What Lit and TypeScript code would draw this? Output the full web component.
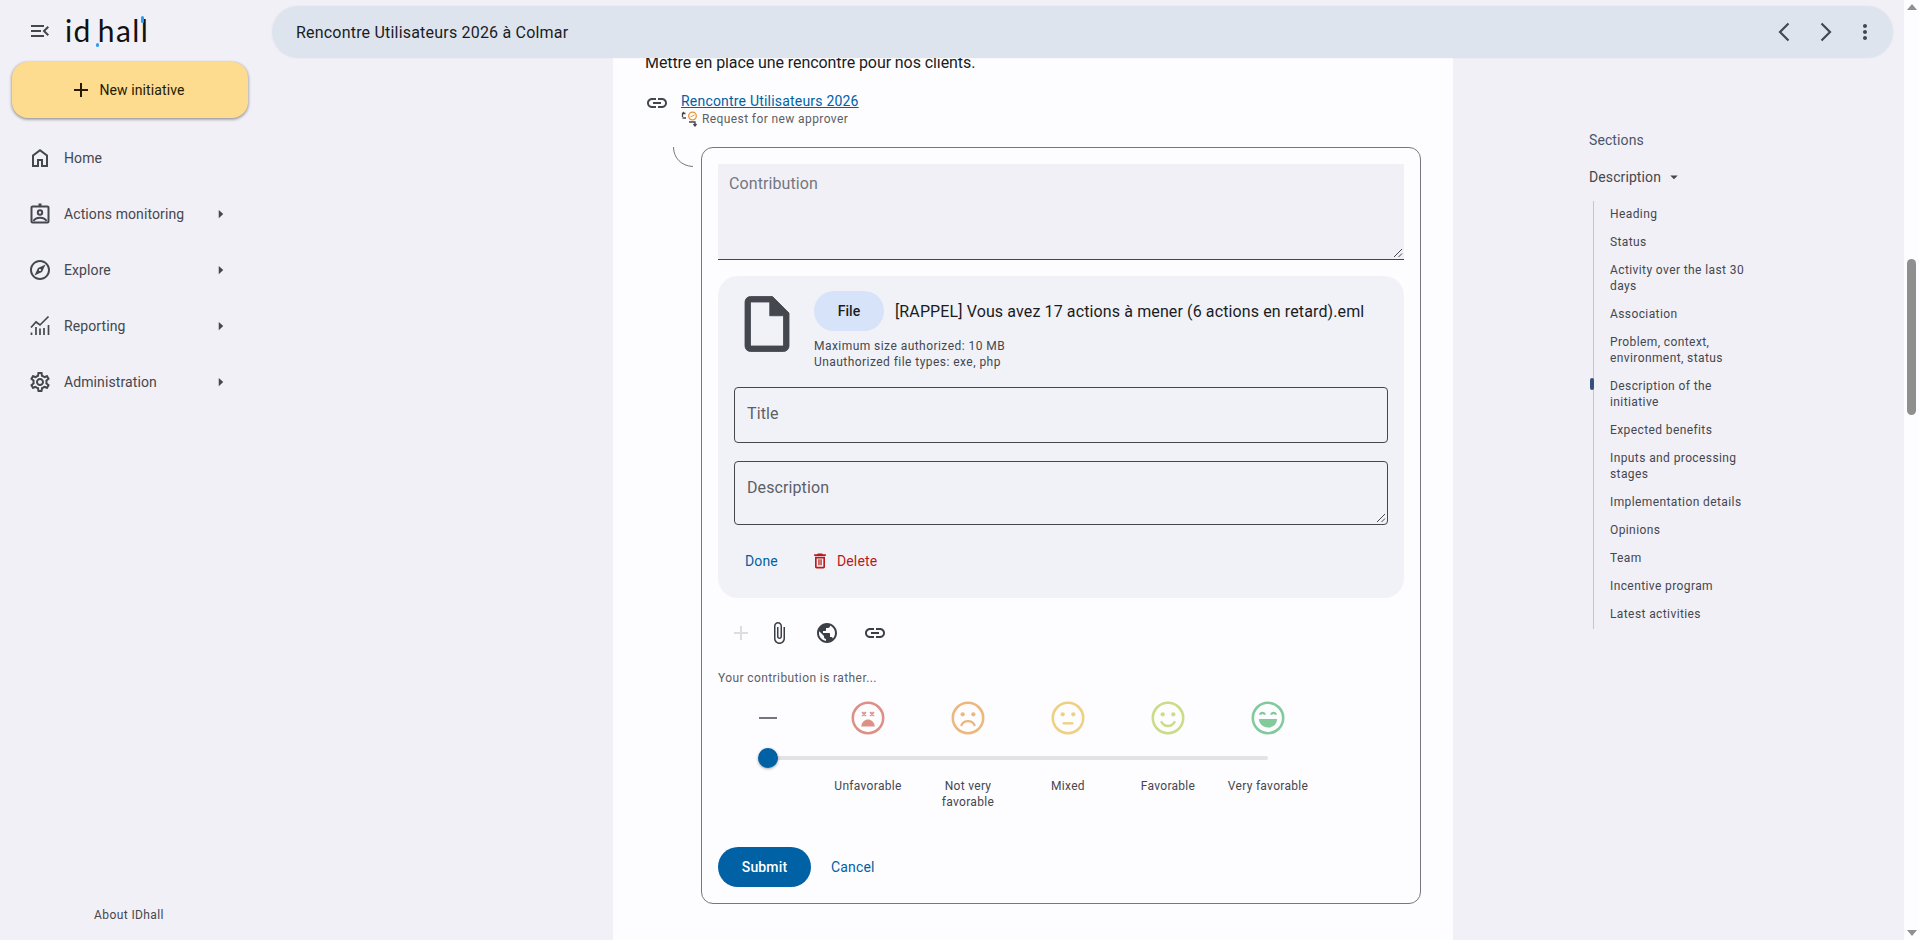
import { css, html, LitElement, svg } from "lit";
import { customElement } from "lit/decorators.js";

const ICONS: Record<string, any> = {
  menu: svg`<path d="M3 18h13v-2H3v2zm0-5h10v-2H3v2zm0-7v2h13V6H3zm18 9.59L17.42 12 21 8.41 19.59 7l-5 5 5 5L21 15.59z"/>`,
  add: svg`<path d="M19 13h-6v6h-2v-6H5v-2h6V5h2v6h6v2z"/>`,
  home: svg`<path d="M6 19h3v-6h6v6h3v-9l-6-4.5L6 10v9zm-2 2V9l8-6 8 6v12h-7v-6h-2v6H4z"/>`,
  actions: svg`<g fill="none" stroke="currentColor" stroke-width="2"><rect x="3.5" y="4.5" width="17" height="16" rx="1"/><circle cx="12" cy="10.5" r="2.2"/><path d="M5.5 19c1.2-2.6 3.8-3.3 6.5-3.3s5.3.7 6.5 3.3"/></g><rect x="10.5" y="1.5" width="3" height="3"/>`,
  explore: svg`<path d="M12 2C6.48 2 2 6.48 2 12s4.48 10 10 10 10-4.48 10-10S17.52 2 12 2zm0 18c-4.41 0-8-3.59-8-8s3.59-8 8-8 8 3.59 8 8-3.59 8-8 8zm-5.5-2.5l7.51-3.49L17.5 6.5 9.99 9.99 6.5 17.5zm5.5-6.6c.61 0 1.1.49 1.1 1.1s-.49 1.1-1.1 1.1-1.1-.49-1.1-1.1.49-1.1 1.1-1.1z"/>`,
  reporting: svg`<g fill="none" stroke="currentColor" stroke-width="1.7"><path d="M3 13.5l5-5.5 4 3 8.5-8.5"/><path d="M3.5 21v-2.5M8 21v-8M12 21v-6.5M16 21v-7M20.5 21v-10"/></g>`,
  settings: svg`<path d="M19.43 12.98c.04-.32.07-.64.07-.98 0-.34-.03-.66-.07-.98l2.11-1.65c.19-.15.24-.42.12-.64l-2-3.46c-.09-.16-.26-.25-.44-.25-.06 0-.12.01-.17.03l-2.49 1c-.52-.4-1.08-.73-1.69-.98l-.38-2.65C14.46 2.18 14.25 2 14 2h-4c-.25 0-.46.18-.49.42l-.38 2.65c-.61.25-1.17.59-1.69.98l-2.49-1c-.06-.02-.12-.03-.18-.03-.17 0-.34.09-.43.25l-2 3.46c-.13.22-.07.49.12.64l2.11 1.65c-.04.32-.07.65-.07.98 0 .33.03.66.07.98l-2.11 1.65c-.19.15-.24.42-.12.64l2 3.46c.09.16.26.25.44.25.06 0 .12-.01.17-.03l2.49-1c.52.4 1.08.73 1.69.98l.38 2.65c.03.24.24.42.49.42h4c.25 0 .46-.18.49-.42l.38-2.65c.61-.25 1.17-.59 1.69-.98l2.49 1c.06.02.12.03.18.03.17 0 .34-.09.43-.25l2-3.46c.12-.22.07-.49-.12-.64l-2.11-1.65zm-1.98-1.71c.04.31.05.52.05.73 0 .21-.02.43-.05.73l-.14 1.13.89.7 1.08.84-.7 1.21-1.27-.51-1.04-.42-.9.68c-.43.32-.84.56-1.25.73l-1.06.43-.16 1.13-.2 1.35h-1.4l-.19-1.35-.16-1.13-1.06-.43c-.43-.18-.83-.41-1.23-.71l-.91-.7-1.06.43-1.27.51-.7-1.21 1.08-.84.89-.7-.14-1.13c-.03-.31-.05-.54-.05-.74s.02-.43.05-.73l.14-1.13-.89-.7-1.08-.84.7-1.21 1.27.51 1.04.42.9-.68c.43-.32.84-.56 1.25-.73l1.06-.43.16-1.13.2-1.35h1.39l.19 1.35.16 1.13 1.06.43c.43.18.83.41 1.23.71l.91.7 1.06-.43 1.27-.51.7 1.21-1.07.85-.89.7.14 1.13zM12 8c-2.21 0-4 1.79-4 4s1.79 4 4 4 4-1.79 4-4-1.79-4-4-4zm0 6c-1.1 0-2-.9-2-2s.9-2 2-2 2 .9 2 2-.9 2-2 2z"/>`,
  caret: svg`<path d="M9 17.5l6-5.5-6-5.5v11z"/>`,
  caretDown: svg`<path d="M7 10l5 5 5-5z"/>`,
  back: svg`<path d="M15.5 3.5L7 12l8.5 8.5" fill="none" stroke="currentColor" stroke-width="2.2"/>`,
  next: svg`<path d="M8.5 3.5L17 12l-8.5 8.5" fill="none" stroke="currentColor" stroke-width="2.2"/>`,
  more: svg`<path d="M12 8c1.1 0 2-.9 2-2s-.9-2-2-2-2 .9-2 2 .9 2 2 2zm0 2c-1.1 0-2 .9-2 2s.9 2 2 2 2-.9 2-2-.9-2-2-2zm0 6c-1.1 0-2 .9-2 2s.9 2 2 2 2-.9 2-2-.9-2-2-2z"/>`,
  link: svg`<path d="M3.9 12c0-1.71 1.39-3.1 3.1-3.1h4V7H7c-2.76 0-5 2.24-5 5s2.24 5 5 5h4v-1.9H7c-1.71 0-3.1-1.39-3.1-3.1zM8 13h8v-2H8v2zm9-6h-4v1.9h4c1.71 0 3.1 1.39 3.1 3.1s-1.39 3.1-3.1 3.1h-4V17h4c2.76 0 5-2.24 5-5s-2.24-5-5-5z"/>`,
  file: svg`<path stroke="currentColor" stroke-width=".3" stroke-linejoin="round" d="M14 2H6c-1.1 0-1.99.9-1.99 2L4 20c0 1.1.89 2 1.99 2H18c1.1 0 2-.9 2-2V8l-6-6zM6 20V4h7v5h5v11H6z"/>`,
  trash: svg`<path d="M16 9v10H8V9h8m-1.5-6h-5l-1 1H5v2h14V4h-3.5l-1-1zM18 7H6v12c0 1.1.9 2 2 2h8c1.1 0 2-.9 2-2V7z"/><path d="M10 10h1.5v7H10zM12.5 10H14v7h-1.5z"/>`,
  clip: svg`<path d="M16.5 6v11.5c0 2.21-1.79 4-4 4s-4-1.79-4-4V5c0-1.38 1.12-2.5 2.5-2.5s2.5 1.12 2.5 2.5v10.5c0 .55-.45 1-1 1s-1-.45-1-1V6H10v9.5c0 1.38 1.12 2.5 2.5 2.5s2.5-1.12 2.5-2.5V5c0-2.21-1.79-4-4-4S7 2.79 7 5v12.5c0 3.04 2.46 5.5 5.5 5.5s5.5-2.46 5.5-5.5V6h-1.5z"/>`,
  globe: svg`<path d="M12 2C6.48 2 2 6.48 2 12s4.48 10 10 10 10-4.48 10-10S17.52 2 12 2zm-1 17.93c-3.95-.49-7-3.85-7-7.93 0-.62.08-1.21.21-1.79L9 15v1c0 1.1.9 2 2 2v1.93zm6.9-2.54c-.26-.81-1-1.39-1.9-1.39h-1v-3c0-.55-.45-1-1-1H8v-2h2c.55 0 1-.45 1-1V7h2c1.1 0 2-.9 2-2v-.41c2.93 1.19 5 4.06 5 7.41 0 2.08-.8 3.97-2.1 5.39z"/>`,
};

const icon = (name: string, size = 24) =>
  html`<svg class="icon" width=${size} height=${size} viewBox="0 0 24 24" fill="currentColor">${ICONS[name]}</svg>`;

const FACES = [
  {
    label: "Unfavorable",
    color: "#dd9184",
    face: svg`<path d="M10.5 10.5l3.5 3.5M14 10.5l-3.5 3.5M18 10.5l3.5 3.5M21.5 10.5l-3.5 3.5" stroke-width="1.8"/><path d="M9.5 24c1-4.5 3.5-6.5 6.5-6.5s5.5 2 6.5 6.5z" fill="currentColor" stroke="none"/>`,
  },
  {
    label: "Not very favorable",
    color: "#ecb87e",
    face: svg`<circle cx="11" cy="12.5" r="2" fill="currentColor" stroke="none"/><circle cx="21" cy="12.5" r="2" fill="currentColor" stroke="none"/><path d="M9.5 23.5c1.3-3 3.7-4.5 6.5-4.5s5.2 1.5 6.5 4.5" stroke-width="2.2"/>`,
  },
  {
    label: "Mixed",
    color: "#edd181",
    face: svg`<circle cx="11" cy="12.5" r="2" fill="currentColor" stroke="none"/><circle cx="21" cy="12.5" r="2" fill="currentColor" stroke="none"/><path d="M11 21h10" stroke-width="2.2"/>`,
  },
  {
    label: "Favorable",
    color: "#c9dd85",
    face: svg`<circle cx="11" cy="12.5" r="2" fill="currentColor" stroke="none"/><circle cx="21" cy="12.5" r="2" fill="currentColor" stroke="none"/><path d="M9.5 19c1.3 3 3.7 4.5 6.5 4.5s5.2-1.5 6.5-4.5" stroke-width="2.2"/>`,
  },
  {
    label: "Very favorable",
    color: "#82c99c",
    face: svg`<path d="M8.5 13c.5-2.5 4-2.5 4.5 0M19 13c.5-2.5 4-2.5 4.5 0" stroke-width="2"/><path d="M7.5 17h17c0 4.5-3.8 8-8.5 8s-8.5-3.5-8.5-8z" fill="currentColor" stroke="none"/>`,
  },
];

const NAV = [
  { label: "Home", icon: "home" },
  { label: "Actions monitoring", icon: "actions", sub: true },
  { label: "Explore", icon: "explore", sub: true },
  { label: "Reporting", icon: "reporting", sub: true },
  { label: "Administration", icon: "settings", sub: true },
];

const SECTIONS = [
  "Heading",
  "Status",
  "Activity over the last 30 days",
  "Association",
  "Problem, context, environment, status",
  "Description of the initiative",
  "Expected benefits",
  "Inputs and processing stages",
  "Implementation details",
  "Opinions",
  "Team",
  "Incentive program",
  "Latest activities",
];

@customElement("app-root")
export class AppRoot extends LitElement {
  static styles = css`
    :host {
      display: block;
      height: 100vh;
      overflow: hidden;
      font-family: Roboto, "Liberation Sans", sans-serif;
      color: #1a1c1e;
    }
    .icon {
      display: block;
      flex: none;
    }
    .shell {
      display: flex;
      height: 100%;
      background: #f1f0f6;
    }

    /* left rail */
    .side {
      width: 272px;
      flex: none;
      display: flex;
      flex-direction: column;
      padding: 0 0 18px 12px;
      box-sizing: border-box;
    }
    .brand {
      display: flex;
      align-items: center;
      height: 62px;
      padding-left: 16px;
      gap: 13px;
      color: #44474e;
    }
    .logo {
      position: relative;
      font: 400 30px/40px Lato, sans-serif;
      color: #111;
      letter-spacing: 1.4px;
      margin-top: -2px;
    }
    .logo b {
      font-weight: 400;
      margin-left: 6px;
    }
    .logo i {
      position: absolute;
      background: #2f9bf0;
      border-radius: 2px;
    }
    .logo .a {
      left: 31px;
      top: 33px;
      width: 3px;
      height: 4px;
    }
    .logo .b {
      left: 76px;
      top: 6px;
      width: 3px;
      height: 7px;
    }
    .create {
      display: flex;
      align-items: center;
      justify-content: center;
      gap: 6px;
      width: 236px;
      height: 56px;
      border-radius: 16px;
      background: #fddc90;
      box-shadow: 0 1px 3px rgba(0, 0, 0, 0.3), 0 1px 3px 1px rgba(0, 0, 0, 0.15);
      font-size: 14px;
      font-weight: 450;
      letter-spacing: 0.1px;
      color: #261a00;
      padding-right: 6px;
      box-sizing: border-box;
    }
    .nav {
      margin-top: 12px;
      width: 218px;
    }
    .nav-item {
      display: flex;
      align-items: center;
      height: 56px;
      padding-left: 16px;
      gap: 12px;
      font-size: 14px;
      letter-spacing: 0.1px;
      color: #44474e;
    }
    .nav-item span {
      flex: 1;
    }
    .about {
      margin-top: auto;
      width: 234px;
      text-align: center;
      font-size: 12px;
      letter-spacing: 0.4px;
      color: #44474e;
    }

    /* centre */
    .main {
      flex: 1;
      position: relative;
      min-width: 0;
      display: flex;
      align-items: stretch;
    }
    .topbar {
      position: absolute;
      top: 6px;
      left: 0;
      right: 11px;
      height: 52px;
      border-radius: 26px;
      background: #dee4ee;
      box-shadow: 0 0 3px rgba(0, 0, 0, 0.05);
      display: flex;
      align-items: center;
      padding: 0 16px 0 24px;
      font-size: 16px;
      letter-spacing: 0.2px;
      color: #1a1c1e;
      z-index: 2;
    }
    .topbar .title {
      flex: 1;
    }
    .topbar .btns {
      display: flex;
      gap: 16px;
      color: #44474e;
    }
    .panel {
      margin: 58px 0 0 341px;
      width: 840px;
      background: #fdfcff;
      box-sizing: border-box;
      padding: 0 32px;
      flex: none;
    }
    .intro {
      margin-top: -7px;
      font-size: 16px;
      line-height: 24px;
      letter-spacing: -0.08px;
    }
    .ref {
      display: flex;
      gap: 12px;
      margin-top: 16px;
    }
    .ref .link-icon {
      color: #44474e;
    }
    .ref a {
      display: block;
      font-size: 14px;
      line-height: 20px;
      letter-spacing: 0.2px;
      color: #0061a4;
      text-decoration: underline;
    }
    .ref .req {
      display: flex;
      align-items: center;
      gap: 4px;
      height: 18px;
      margin-top: -1px;
      font-size: 12px;
      letter-spacing: 0.4px;
      color: #5c5f66;
    }

    .thread {
      display: flex;
      margin-top: 19px;
      padding-left: 28px;
    }
    .curve {
      width: 28px;
      height: 20px;
      flex: none;
    }
    .card {
      width: 720px;
      height: 757px;
      box-sizing: border-box;
      border: 1px solid #74777f;
      border-radius: 12px;
      padding: 16px;
      flex: none;
    }
    .area {
      height: 96px;
      box-sizing: border-box;
      background: #f1f0f6;
      border-bottom: 1px solid #44474e;
      padding: 11px 11px;
      font-size: 16px;
      line-height: 18px;
      letter-spacing: 0.1px;
      color: #74777f;
      position: relative;
    }
    .grip {
      position: absolute;
      right: 1px;
      bottom: 1px;
      width: 10px;
      height: 10px;
    }
    .filebox {
      margin-top: 16px;
      height: 322px;
      box-sizing: border-box;
      background: #f1f2f8;
      border-radius: 20px;
      padding: 15px 16px 16px;
    }
    .filehead {
      display: flex;
      color: #44474e;
    }
    .fileicon {
      width: 64px;
      height: 66px;
      flex: none;
    }
    .filemeta {
      margin-left: 16px;
      min-width: 0;
    }
    .fileline {
      display: flex;
      align-items: center;
      gap: 11px;
      font-size: 16px;
      letter-spacing: 0.12px;
      color: #1a1c1e;
    }
    .pick {
      width: 70px;
      height: 40px;
      border-radius: 20px;
      background: #d7e3f8;
      display: flex;
      align-items: center;
      justify-content: center;
      font-size: 14px;
      font-weight: 500;
      letter-spacing: 0.1px;
    }
    .hint {
      margin-top: 7px;
      font-size: 12px;
      line-height: 16px;
      letter-spacing: 0.45px;
      color: #44474e;
    }
    .field {
      margin-top: 17px;
      height: 56px;
      box-sizing: border-box;
      border: 1px solid #44474e;
      border-radius: 4px;
      padding: 0 12px;
      font-size: 16px;
      line-height: 52px;
      letter-spacing: 0.1px;
      color: #5c5f66;
      position: relative;
    }
    .field + .field {
      margin-top: 18px;
      height: 64px;
    }
    .filelinks {
      display: flex;
      align-items: center;
      margin-top: 26px;
      padding-left: 11px;
      font-size: 14px;
      font-weight: 450;
      letter-spacing: 0.15px;
      color: #0061a4;
    }
    .filelinks .del {
      display: flex;
      align-items: center;
      gap: 7px;
      margin-left: 32px;
      color: #ba1a1a;
    }
    .tools {
      display: flex;
      align-items: center;
      margin-top: 23px;
      padding-left: 11px;
      gap: 24px;
      height: 24px;
      color: #3b3f46;
    }
    .tools .off {
      color: #dcdde3;
    }
    .tools .clip {
      margin-left: -10px;
    }
    .ask {
      margin-top: 25px;
      font-size: 12px;
      line-height: 16px;
      letter-spacing: 0.4px;
      color: #5c5f66;
    }
    .faces {
      display: grid;
      grid-template-columns: repeat(6, 100px);
      margin-top: 15px;
      justify-items: center;
      align-items: center;
      height: 34px;
    }
    .dash {
      width: 18px;
      height: 2px;
      background: #74777f;
    }
    .track {
      position: relative;
      margin: 21px 0 0 50px;
      width: 500px;
      height: 4px;
      border-radius: 2px;
      background: #e2e2e7;
    }
    .thumb {
      position: absolute;
      left: -10px;
      top: -8px;
      width: 20px;
      height: 20px;
      border-radius: 50%;
      background: #0061a4;
      box-shadow: 0 1px 3px rgba(0, 0, 0, 0.35);
    }
    .labels {
      display: grid;
      grid-template-columns: repeat(6, 100px);
      margin-top: 18px;
      justify-items: center;
      height: 69px;
      font-size: 12px;
      line-height: 16px;
      letter-spacing: 0.3px;
      text-align: center;
      color: #44474e;
    }
    .labels div {
      width: 84px;
    }
    .actions {
      display: flex;
      align-items: center;
      gap: 20px;
      font-size: 14px;
      font-weight: 450;
      letter-spacing: 0.15px;
      color: #0061a4;
    }
    .submit {
      width: 93px;
      height: 40px;
      border-radius: 20px;
      background: #0061a4;
      color: #fff;
      font-weight: 500;
      display: flex;
      align-items: center;
      justify-content: center;
    }

    /* right rail */
    .toc {
      margin-left: 136px;
      padding-top: 130px;
      width: 170px;
      flex: none;
    }
    .toc h4 {
      margin: 0;
      font-size: 14px;
      line-height: 20px;
      font-weight: 400;
      letter-spacing: 0.1px;
      color: #4a5568;
    }
    .toc .group {
      display: flex;
      align-items: center;
      gap: 4px;
      margin-top: 17px;
      font-size: 14px;
      line-height: 20px;
      letter-spacing: 0.1px;
      color: #44474e;
    }
    .toc ul {
      list-style: none;
      margin: 14px 0 0 4px;
      padding: 5px 0 7px 16px;
      border-left: 1px solid #c4c6cf;
      display: flex;
      flex-direction: column;
      gap: 12px;
      width: 137px;
    }
    .toc li {
      position: relative;
      font-size: 12px;
      line-height: 16px;
      letter-spacing: 0.4px;
      color: #44474e;
    }
    .toc li.on::before {
      content: "";
      position: absolute;
      left: -20px;
      top: 0;
      width: 4px;
      height: 12px;
      border-radius: 2px;
      background: #35507a;
    }

    .scrollbar {
      width: 15px;
      flex: none;
      background: #fdfcff;
      display: flex;
      flex-direction: column;
      align-items: center;
      justify-content: space-between;
      position: relative;
      padding: 4px 0;
      box-sizing: border-box;
    }
    .scrollbar .thumbbar {
      position: absolute;
      top: 259px;
      left: 3px;
      width: 9px;
      height: 156px;
      border-radius: 5px;
      background: #8f8f8f;
    }
    .arrow {
      width: 0;
      height: 0;
      border-left: 5px solid transparent;
      border-right: 5px solid transparent;
    }
    .arrow.up {
      border-bottom: 6px solid #8f8f8f;
    }
    .arrow.down {
      border-top: 6px solid #8f8f8f;
    }
  `;

  renderFace(f: { color: string; face: any }) {
    return html`<svg
      width="34"
      height="34"
      viewBox="0 0 32 32"
      fill="none"
      stroke="currentColor"
      style="color:${f.color}"
    >
      <circle cx="16" cy="16" r="14.3" stroke-width="2.4" />
      ${f.face}
    </svg>`;
  }

  renderGrip() {
    return html`<svg class="grip" viewBox="0 0 10 10" fill="none" stroke="#44474e">
      <path d="M1 9l8-8M5.5 9L9 5.5" />
    </svg>`;
  }

  render() {
    return html`
      <div class="shell">
        <aside class="side">
          <div class="brand">
            ${icon("menu")}
            <div class="logo">id<b>hall</b><i class="a"></i><i class="b"></i></div>
          </div>
          <div class="create">${icon("add")}<span>New initiative</span></div>
          <nav class="nav">
            ${NAV.map(
              (n) => html`<div class="nav-item">
                ${icon(n.icon)}<span>${n.label}</span>${n.sub ? icon("caret", 18) : ""}
              </div>`
            )}
          </nav>
          <div class="about">About IDhall</div>
        </aside>

        <div class="main">
          <header class="topbar">
            <div class="title">Rencontre Utilisateurs 2026 à Colmar</div>
            <div class="btns">${icon("back")}${icon("next")}${icon("more")}</div>
          </header>
          <section class="panel">
            <div class="intro">Mettre en place une rencontre pour nos clients.</div>
            <div class="ref">
              <div class="link-icon">${icon("link")}</div>
              <div>
                <a>Rencontre Utilisateurs 2026</a>
                <div class="req">
                  <svg width="17" height="16" viewBox="0 0 17 16" fill="none">
                    <path d="M1.5 6V2.5h3M3 1L1.5 2.5M5 7H1.5" stroke="#44474e" stroke-width="1.3" />
                    <circle cx="11.5" cy="5" r="3.8" stroke="#e8953a" stroke-width="1.3" />
                    <path d="M9.5 6l4-2" stroke="#e8953a" />
                    <path d="M8 11h6v3M12.5 13l1.5 2 1.5-2" stroke="#44474e" stroke-width="1.3" />
                  </svg>
                  <span>Request for new approver</span>
                </div>
              </div>
            </div>
            <div class="thread">
              <svg class="curve" viewBox="0 0 28 20" fill="none" stroke="#74777f">
                <path d="M0.5 0c0 11 8 19 19.5 19.5" />
              </svg>
              <div class="card">
                <div class="area">Contribution ${this.renderGrip()}</div>
                <div class="filebox">
                  <div class="filehead">
                    <div class="fileicon">${icon("file", 66)}</div>
                    <div class="filemeta">
                      <div class="fileline">
                        <div class="pick">File</div>
                        <span>[RAPPEL] Vous avez 17 actions à mener (6 actions en retard).eml</span>
                      </div>
                      <div class="hint">
                        Maximum size authorized: 10 MB<br />Unauthorized file types: exe, php
                      </div>
                    </div>
                  </div>
                  <div class="field">Title</div>
                  <div class="field">Description ${this.renderGrip()}</div>
                  <div class="filelinks">
                    <span>Done</span>
                    <span class="del">${icon("trash", 20)}Delete</span>
                  </div>
                </div>
                <div class="tools">
                  <span class="off">${icon("add")}</span>
                  <span class="clip">${icon("clip")}</span>
                  ${icon("globe")}${icon("link")}
                </div>
                <div class="ask">Your contribution is rather...</div>
                <div class="faces">
                  <div class="dash"></div>
                  ${FACES.map((f) => this.renderFace(f))}
                </div>
                <div class="track"><div class="thumb"></div></div>
                <div class="labels">
                  <div></div>
                  ${FACES.map((f) => html`<div>${f.label}</div>`)}
                </div>
                <div class="actions">
                  <div class="submit">Submit</div>
                  <span>Cancel</span>
                </div>
              </div>
            </div>
          </section>
          <div class="toc">
            <h4>Sections</h4>
            <div class="group">Description ${icon("caretDown", 18)}</div>
            <ul>
              ${SECTIONS.map(
                (s, i) => html`<li class=${i === 5 ? "on" : ""}>${s}</li>`
              )}
            </ul>
          </div>
        </div>

        <div class="scrollbar">
          <div class="arrow up"></div>
          <div class="thumbbar"></div>
          <div class="arrow down"></div>
        </div>
      </div>
    `;
  }
}
